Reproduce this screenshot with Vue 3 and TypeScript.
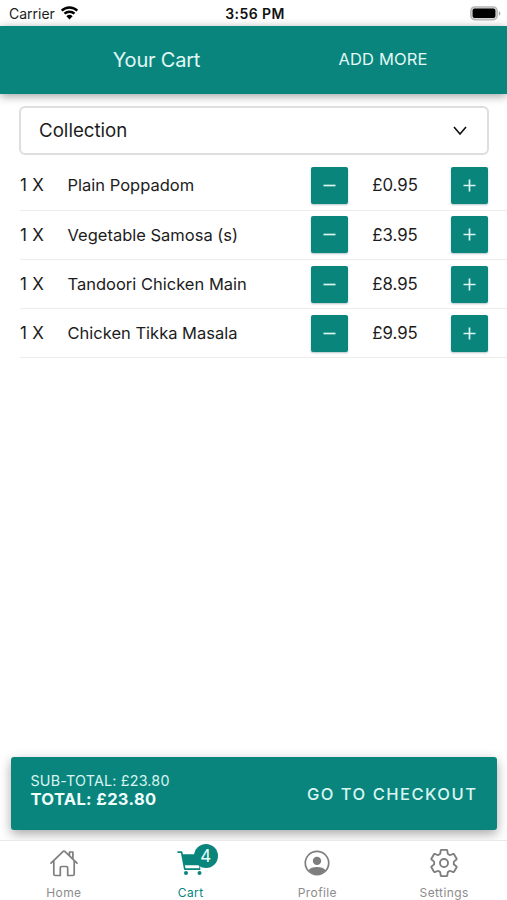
<script setup lang="ts">
interface CartItem {
  qty: number
  name: string
  price: string
}

const items: CartItem[] = [
  { qty: 1, name: 'Plain Poppadom', price: '£0.95' },
  { qty: 1, name: 'Vegetable Samosa (s)', price: '£3.95' },
  { qty: 1, name: 'Tandoori Chicken Main', price: '£8.95' },
  { qty: 1, name: 'Chicken Tikka Masala', price: '£9.95' },
]
</script>

<template>
  <div class="screen">
    <div class="status">
      <div class="carrier">
        <span>Carrier</span>
        <svg class="wifi" viewBox="0 0 18 14" width="19" height="14">
          <path d="M1.2 4.7a11.2 11.2 0 0 1 15.6 0M4 7.7a7.2 7.2 0 0 1 10 0" fill="none" stroke="#000" stroke-width="2.4" />
          <path d="M9 13.4 5.9 10.2a4.5 4.5 0 0 1 6.2 0z" fill="#000" />
        </svg>
      </div>
      <div class="clock">3:56 PM</div>
      <svg class="battery" viewBox="0 0 31 15" width="31" height="15">
        <rect x="0.8" y="0.8" width="26.4" height="13" rx="4" fill="#d4d4d4" stroke="#b4b4b4" stroke-width="1.3" />
        <rect x="2.6" y="2.5" width="22.8" height="9.6" rx="2" fill="#000" />
        <path d="M28.8 5v4.8q1.6-.8 1.6-2.4T28.8 5z" fill="#aaa" />
      </svg>
    </div>

    <header class="header">
      <h1 class="title">Your Cart</h1>
      <button class="add">ADD MORE</button>
    </header>

    <main class="content">
      <div class="select">
        <span>Collection</span>
        <svg viewBox="0 0 14 10" width="14" height="10">
          <path d="M1 1l6 7 6-7" fill="none" stroke="#111" stroke-width="1.6" />
        </svg>
      </div>
      <ul class="list">
        <li v-for="item in items" :key="item.name" class="row">
          <span class="qty">{{ item.qty }} X</span>
          <span class="name">{{ item.name }}</span>
          <button class="step" aria-label="Decrease">
            <svg viewBox="0 0 13 13" width="13" height="13"><path d="M.5 6.5h12" stroke="#d9f5f1" stroke-width="1.7" /></svg>
          </button>
          <span class="price">{{ item.price }}</span>
          <button class="step" aria-label="Increase">
            <svg viewBox="0 0 13 13" width="13" height="13"><path d="M.5 6.5h12M6.5.5v12" stroke="#d9f5f1" stroke-width="1.7" /></svg>
          </button>
        </li>
      </ul>
    </main>

    <section class="checkout">
      <div class="totals">
        <span class="sub">SUB-TOTAL: £23.80</span>
        <strong class="total">TOTAL: £23.80</strong>
      </div>
      <span class="go">GO TO CHECKOUT</span>
    </section>

    <nav class="tabs">
      <div class="tab">
        <svg viewBox="0 0 30 30" width="30" height="30" fill="none" stroke="#7e7e7e" stroke-width="1.7" stroke-linejoin="round" stroke-linecap="round">
          <path d="M2 15.2 14.2 3.400q.8-.7 1.600 0L28 15.200M4.800 13v13q0 1.500 1.500 1.500h5v-7.700q0-1.300 1.300-1.300h4.800q1.300 0 1.300 1.300v7.700h5q1.500 0 1.500-1.500V13M20.500 7.500V4h3.400v6.700" />
        </svg>
        <span class="label">Home</span>
      </div>
      <div class="tab active">
        <span class="cart">
          <svg viewBox="0 0 30 30" width="30" height="30">
            <path d="M6.300 6.300H25L23.500 17.300H8.300z" fill="#0a857c" />
            <path d="M1.500 4.200h4.100l3.200 17h15.500" fill="none" stroke="#0a857c" stroke-width="1.700" stroke-linejoin="round" />
            <path d="M23.700 18.300v2.500" stroke="#0a857c" stroke-width="1" />
            <circle cx="10" cy="25" r="2" fill="#0a857c" />
            <circle cx="23.500" cy="25" r="2" fill="#0a857c" />
          </svg>
          <span class="badge">4</span>
        </span>
        <span class="label">Cart</span>
      </div>
      <div class="tab">
        <svg viewBox="0 0 30 30" width="30" height="30">
          <circle cx="15" cy="15" r="11.7" fill="none" stroke="#7e7e7e" stroke-width="1.7" />
          <circle cx="15" cy="12.9" r="4.2" fill="#7e7e7e" />
          <path d="M6.500 22.200C8 20 11.200 19 15 19s7 1 8.500 3.200Q20 26.400 15 26.400t-8.500-4.200z" fill="#7e7e7e" />
        </svg>
        <span class="label">Profile</span>
      </div>
      <div class="tab">
        <svg viewBox="11 11 490 490" width="30" height="30" fill="none" stroke="#7e7e7e" stroke-width="30">
          <circle cx="256" cy="256" r="66" />
          <path d="M416.39 256a154.34 154.34 0 01-1.53 20.79l45.21 35.46a10.81 10.81 0 012.45 13.75l-42.77 74a10.81 10.81 0 01-13.14 4.59l-44.9-18.08a16.11 16.11 0 00-15.17 1.75A164.48 164.48 0 01325 400.8a15.94 15.94 0 00-8.82 12.14l-6.73 47.89a11.08 11.08 0 01-10.68 9.17h-85.54a11.11 11.11 0 01-10.69-8.87l-6.72-47.82a16.07 16.07 0 00-9-12.22 155.3 155.3 0 01-21.46-12.57 16 16 0 00-15.11-1.71l-44.89 18.07a10.81 10.81 0 01-13.14-4.58l-42.77-74a10.8 10.8 0 012.45-13.75l38.21-30a16.05 16.05 0 006-14.08c-.36-4.17-.58-8.33-.58-12.5s.21-8.27.58-12.35a16 16 0 00-6.07-13.94l-38.19-30A10.81 10.81 0 0149.48 186l42.77-74a10.81 10.81 0 0113.14-4.59l44.9 18.08a16.11 16.11 0 0015.17-1.75A164.48 164.48 0 01187 111.2a15.94 15.94 0 008.82-12.14l6.73-47.89A11.08 11.08 0 01213.23 42h85.54a11.11 11.11 0 0110.69 8.87l6.72 47.82a16.07 16.07 0 009 12.22 155.3 155.3 0 0121.46 12.57 16 16 0 0015.11 1.71l44.89-18.07a10.81 10.81 0 0113.14 4.58l42.77 74a10.8 10.8 0 01-2.45 13.75l-38.21 30a16.05 16.05 0 00-6.05 14.08c.33 4.14.55 8.3.55 12.47z" stroke-linejoin="round" />
        </svg>
        <span class="label">Settings</span>
      </div>
    </nav>
  </div>
</template>

<style>
body {
  margin: 0;
  background: #fff;
}
</style>

<style scoped>
.screen {
  display: flex;
  flex-direction: column;
  width: 507px;
  height: 900px;
  overflow: hidden;
  background: #fff;
  color: #1c1c1c;
  font-family: Inter, "Liberation Sans", sans-serif;
}
.status {
  display: grid;
  grid-template-columns: 1fr auto 1fr;
  align-items: center;
  flex: none;
  height: 25.5px;
  padding: 2px 6px 0 9px;
  box-sizing: border-box;
  font-size: 14px;
}
.carrier {
  display: flex;
  align-items: center;
  gap: 5.5px;
}
.wifi {
  margin-top: -2px;
}
.clock {
  font-weight: 600;
  font-size: 14px;
  letter-spacing: 0.4px;
  color: #111;
}
.battery {
  justify-self: end;
  margin-top: -1px;
}
.header {
  display: grid;
  grid-template-columns: 313px 140px;
  align-items: center;
  flex: none;
  height: 68.5px;
  background: #0a857d;
  box-shadow: 0 2px 9px rgba(0, 0, 0, 0.38);
  color: #e0f8f5;
  z-index: 1;
}
.title {
  margin: 0;
  font-size: 20px;
  font-weight: 400;
  letter-spacing: -0.2px;
  text-align: center;
}
.add {
  border: 0;
  padding: 0 0 2px;
  background: none;
  color: inherit;
  font: inherit;
  font-size: 16.5px;
  letter-spacing: 0.15px;
}
.content {
  flex: 1;
  padding-top: 12px;
}
.select {
  display: flex;
  align-items: center;
  justify-content: space-between;
  height: 49px;
  box-sizing: border-box;
  margin: 0 18px 0 19px;
  padding: 0 20px 0 18px;
  border: 2px solid #dedede;
  border-radius: 6px;
  font-size: 18.7px;
}
.list {
  margin: 6.3px 0 0;
  padding: 0 0 0 20px;
  list-style: none;
}
.row {
  display: grid;
  grid-template-columns: 47.5px 243.5px 37px 103px 37px;
  align-items: center;
  height: 49.3px;
  box-sizing: border-box;
  border-bottom: 1.5px solid #ececec;
  font-size: 16.5px;
}
.qty {
  font-size: 17px;
  letter-spacing: 0.3px;
}
.price {
  font-size: 16.8px;
  text-align: center;
  padding-right: 9px;
}
.step {
  display: flex;
  align-items: center;
  justify-content: center;
  width: 37px;
  height: 37px;
  padding: 0;
  border: 0;
  border-radius: 2px;
  background: #0a857b;
  box-shadow: 0 1px 2px rgba(0, 60, 80, 0.3);
}
.checkout {
  display: flex;
  align-items: center;
  justify-content: space-between;
  flex: none;
  height: 73px;
  box-sizing: border-box;
  margin: 0 10px 10px 11px;
  padding: 0 19.5px 0 19.5px;
  border-radius: 3px;
  background: #0a857d;
  box-shadow: 0 4px 12px rgba(0, 0, 0, 0.35);
  color: #d9f5f1;
}
.totals {
  display: flex;
  flex-direction: column;
  margin-bottom: 6px;
}
.sub {
  font-size: 14.3px;
  line-height: 18px;
  letter-spacing: 0.2px;
}
.total {
  font-size: 16.5px;
  font-weight: 700;
  line-height: 19px;
  letter-spacing: 0.35px;
  color: #f0fffc;
}
.go {
  font-size: 16.5px;
  font-weight: 500;
  letter-spacing: 1.5px;
}
.tabs {
  display: grid;
  grid-template-columns: repeat(4, 1fr);
  flex: none;
  height: 60px;
  box-sizing: border-box;
  border-top: 1px solid #e8e8e8;
  background: #fff;
  color: #8c8c8c;
  z-index: 1;
}
.tab {
  display: flex;
  flex-direction: column;
  align-items: center;
  padding: 6.5px 0 0 1px;
}
.active {
  color: #0a857c;
}
.label {
  margin-top: 7.5px;
  font-size: 12px;
  line-height: 16px;
  letter-spacing: 0.4px;
}
.cart {
  position: relative;
  width: 30px;
  height: 30px;
}
.badge {
  position: absolute;
  left: 18px;
  top: -4px;
  width: 24px;
  height: 24px;
  border-radius: 50%;
  background: #0a857c;
  color: #e8fffb;
  font-size: 17px;
  line-height: 24px;
  text-align: center;
}
</style>
